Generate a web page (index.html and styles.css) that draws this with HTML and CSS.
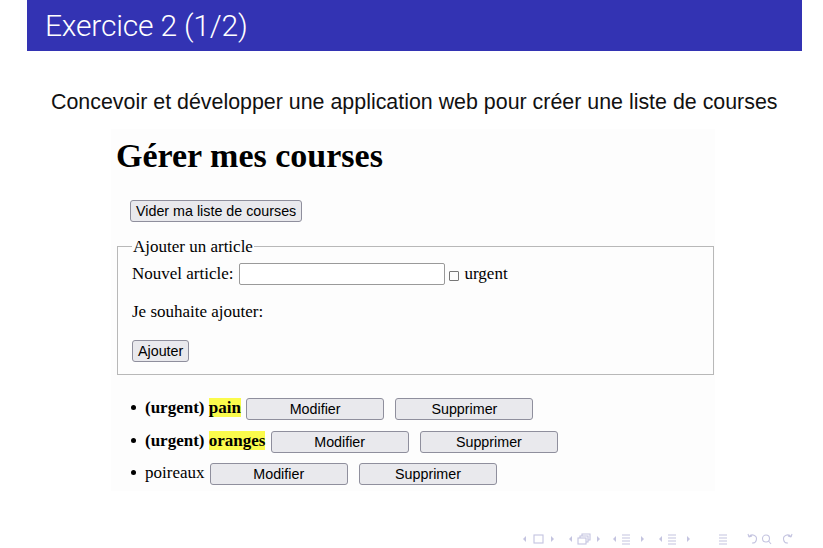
FILE: index.html
```html
<!DOCTYPE html>
<html lang="fr">
<head>
<meta charset="utf-8">
<title>Exercice 2 (1/2)</title>
<link rel="stylesheet" href="styles.css">
</head>
<body>
<div class="slide">
  <header class="frametitle">Exercice 2 (1/2)</header>
  <p class="intro">Concevoir et développer une application web pour créer une liste de courses</p>
  <div class="shot">
    <h1 class="page-title">Gérer mes courses</h1>
    <div class="clear-row"><button class="btn">Vider ma liste de courses</button></div>
    <fieldset class="add-box">
      <legend class="add-legend">Ajouter un article</legend>
      <div class="field-row">
        <label>Nouvel article:</label>
        <input class="text-input" type="text">
        <span class="check"></span>
        <span>urgent</span>
      </div>
      <p class="wish">Je souhaite ajouter:</p>
      <button class="btn btn-add">Ajouter</button>
    </fieldset>
    <ul class="items">
      <li class="item"><b>(urgent) <mark class="hl">pain</mark></b> <button class="btn btn-wide">Modifier</button> <button class="btn btn-wide">Supprimer</button></li>
      <li class="item"><b>(urgent) <mark class="hl">oranges</mark></b> <button class="btn btn-wide">Modifier</button> <button class="btn btn-wide">Supprimer</button></li>
      <li class="item">poireaux <button class="btn btn-wide">Modifier</button> <button class="btn btn-wide">Supprimer</button></li>
    </ul>
  </div>
  <footer class="navbar">
    <svg class="nav-icons" width="276" height="14" viewBox="0 0 276 14" fill="none" stroke="#c4c4e0" stroke-width="1.1">
      <path d="M4 4 L1 7 L4 10 Z" fill="#c4c4e0" stroke="none"/>
      <rect x="12" y="3" width="9" height="8"/>
      <path d="M29 4 L32 7 L29 10 Z" fill="#c4c4e0" stroke="none"/>
      <path d="M50 4 L47 7 L50 10 Z" fill="#c4c4e0" stroke="none"/>
      <rect x="56" y="6" width="8" height="6"/>
      <path d="M58 6 V4 H66 V10 H64"/>
      <path d="M60 4 V2 H68 V8 H66"/>
      <path d="M75 4 L78 7 L75 10 Z" fill="#c4c4e0" stroke="none"/>
      <path d="M94 4 L91 7 L94 10 Z" fill="#c4c4e0" stroke="none"/>
      <path d="M100 3 H108 M100 6 H108 M100 9 H108 M100 12 H108"/>
      <path d="M119 4 L122 7 L119 10 Z" fill="#c4c4e0" stroke="none"/>
      <path d="M140 4 L137 7 L140 10 Z" fill="#c4c4e0" stroke="none"/>
      <path d="M146 3 H154 M146 6 H154 M146 9 H154 M146 12 H154"/>
      <path d="M165 4 L168 7 L165 10 Z" fill="#c4c4e0" stroke="none"/>
      <path d="M197 3 H205 M197 6 H205 M197 9 H205 M197 12 H205"/>
      <path d="M227 5 A4 4 0 1 1 230 11 M227 5 L226 2 M227 5 L230 4"/>
      <circle cx="244" cy="6.5" r="3.5"/>
      <path d="M246.5 9 L249 12"/>
      <path d="M269 5 A4 4 0 1 0 266 11 M269 5 L270 2 M269 5 L266 4"/>
    </svg>
  </footer>
</div>
</body>
</html>
```

FILE: styles.css
```css
html, body {
  margin: 0;
  padding: 0;
  background: #ffffff;
}

.slide {
  width: 823px;
  height: 548px;
  display: flex;
  flex-direction: column;
  overflow: hidden;
}

.frametitle {
  margin: 0 21px 0 27px;
  height: 51px;
  background: #3333b3;
  color: #ffffff;
  font-family: Roboto, "Liberation Sans", sans-serif;
  font-weight: 300;
  font-size: 30px;
  line-height: 51px;
  padding-left: 18px;
  box-sizing: border-box;
  letter-spacing: -0.2px;
}

.intro {
  margin: 39px 0 0 51px;
  font-family: "Liberation Sans", sans-serif;
  font-size: 21.4px;
  line-height: 25px;
  color: #111111;
}

.shot {
  margin: 14px 0 0 111px;
  width: 604px;
  height: 362px;
  background: #fdfdfd;
  font-family: "Liberation Serif", "Times New Roman", serif;
  font-size: 17px;
  color: #000000;
  box-sizing: border-box;
  padding-left: 5px;
}

.page-title {
  margin: 7px 0 0 0;
  font-size: 34px;
  line-height: 39px;
  font-weight: bold;
}

.clear-row {
  margin: 25px 0 0 14px;
}

.btn {
  font-family: "Liberation Sans", Arial, sans-serif;
  font-size: 14.3px;
  height: 22px;
  padding: 0 5px;
  background: #e9e9ed;
  border: 1px solid #8f8f9d;
  border-radius: 3px;
  color: #000000;
  line-height: 20px;
  vertical-align: middle;
}

.add-box {
  margin: 16px 0 0 1px;
  width: 597px;
  box-sizing: border-box;
  border: 1px solid #b8b8b8;
  padding: 6px 13px 12px 14px;
}

.add-legend {
  padding: 0 1px;
  margin-left: 0;
  line-height: 17px;
}

.field-row {
  display: flex;
  align-items: center;
  height: 24px;
  margin-top: 1px;
}

.text-input {
  width: 206px;
  height: 22px;
  box-sizing: border-box;
  border: 1px solid #9a9a9a;
  border-radius: 2px;
  margin: 0 0 0 5px;
  padding: 0;
  background: #ffffff;
}

.check {
  width: 8px;
  height: 8px;
  border: 1px solid #777777;
  border-radius: 1px;
  margin: 3px 6px 0 4px;
}

.wish {
  margin: 16px 0 0 0;
  line-height: 19px;
}

.btn-add {
  margin-top: 19px;
  height: 22px;
}

.items {
  margin: 22px 0 0 0;
  padding-left: 15px;
  list-style: none;
}

.item {
  height: 22px;
  margin-bottom: 10.5px;
  line-height: 22px;
}

.item::before {
  content: "";
  display: inline-block;
  width: 5px;
  height: 5px;
  border-radius: 50%;
  background: #000000;
  margin: 0 9px 3px 0;
  vertical-align: middle;
}

.hl {
  background: #fbfb4c;
  color: #000000;
}

.btn-wide {
  width: 138px;
  margin-left: 1px;
  margin-right: 6px;
}

.navbar {
  margin-top: auto;
  display: flex;
  justify-content: flex-end;
  padding: 0 25px 2px 0;
  height: 14px;
}
```
